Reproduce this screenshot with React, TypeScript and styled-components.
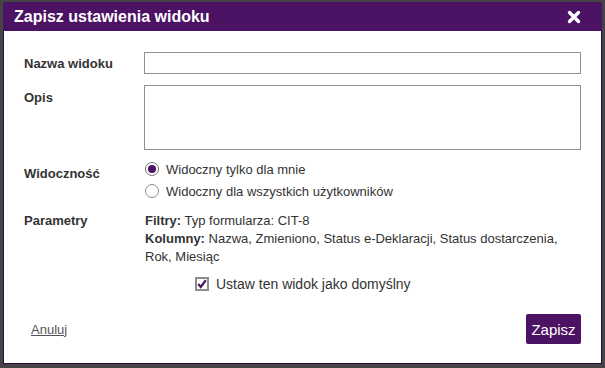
import React from "react";
import styled, { createGlobalStyle } from "styled-components";

const Global = createGlobalStyle`
  html, body { margin: 0; padding: 0; background: #454545; }
  body { font-family: "Liberation Sans", Arial, sans-serif; }
  * { box-sizing: border-box; }
`;

const Page = styled.div`
  width: 605px;
  height: 368px;
  padding: 2px 3px 4px 3px;
  background: #454545;
`;

const Dialog = styled.div`
  width: 599px;
  height: 362px;
  background: #fff;
  border: 1px solid #2d0b3f;
  display: flex;
  flex-direction: column;
`;

const Header = styled.div`
  height: 29px;
  background: #4c1264;
  display: flex;
  align-items: center;
  justify-content: space-between;
  padding: 0 21px 0 10px;
  margin: -1px -1px 0 -1px;
`;

const Title = styled.h1`
  margin: 0;
  font-size: 16px;
  font-weight: bold;
  color: #fff;
  padding-left: 1px;
`;

const Close = styled.button`
  border: 0;
  background: none;
  padding: 0;
  width: 14px;
  height: 14px;
  display: flex;
  cursor: pointer;
`;

const Body = styled.div`
  flex: 1;
  padding: 21px 20px 0 20px;
  display: grid;
  grid-template-columns: 120px 1fr;
  row-gap: 11px;
  align-content: start;
`;

const Label = styled.div<{ $top?: number }>`
  font-size: 13px;
  font-weight: bold;
  color: #333;
  padding-top: ${(p) => p.$top ?? 0}px;
`;

const Input = styled.input`
  width: 437px;
  height: 22px;
  border: 1px solid #8f8f8f;
  margin: 0;
  font: inherit;
  display: block;
`;

const TextArea = styled.textarea`
  width: 437px;
  height: 65px;
  border: 1px solid #8f8f8f;
  margin: 0;
  resize: none;
  display: block;
`;

const RadioGroup = styled.div`
  display: flex;
  flex-direction: column;
  gap: 6px;
`;

const RadioRow = styled.label`
  display: flex;
  align-items: center;
  gap: 7px;
  font-size: 13px;
  color: #333;
  height: 16px;
`;

const RadioDot = styled.span<{ $on?: boolean }>`
  width: 14px;
  height: 14px;
  border-radius: 50%;
  border: 1px solid ${(p) => (p.$on ? "#6e6e6e" : "#8c8c8c")};
  background: #fff;
  display: flex;
  align-items: center;
  justify-content: center;
  margin-left: 1px;
  &::after {
    content: "";
    display: ${(p) => (p.$on ? "block" : "none")};
    width: 8px;
    height: 8px;
    border-radius: 50%;
    background: #4c1264;
  }
`;

const Params = styled.div`
  font-size: 13px;
  color: #333;
  line-height: 18px;
  padding-left: 1px;
  width: 430px;
  b { font-weight: bold; }
`;

const ParamLine = styled.div<{ $top?: number }>`
  padding-top: ${(p) => p.$top ?? 0}px;
`;

const CheckRow = styled.label`
  grid-column: 2;
  display: flex;
  align-items: center;
  gap: 7px;
  font-size: 14px;
  color: #333;
  padding-left: 51px;
  margin-top: -1px;
`;

const CheckBox = styled.span`
  width: 14px;
  height: 14px;
  border: 2px solid #8c8c8c;
  display: flex;
  align-items: center;
  justify-content: center;
  background: #fff;
`;

const Footer = styled.div`
  display: flex;
  justify-content: space-between;
  align-items: center;
  padding: 0 20px 19px 27px;
`;

const Cancel = styled.a`
  font-size: 13px;
  color: #555;
  text-decoration: underline;
  cursor: pointer;
`;

const Save = styled.button`
  background: #4c1264;
  color: #fff;
  border: 0;
  border-radius: 2px;
  font-family: "Liberation Sans", Arial, sans-serif;
  font-size: 15px;
  width: 55px;
  height: 30px;
  padding: 0;
`;

export default function App() {
  return (
    <Page>
      <Global />
      <Dialog>
        <Header>
          <Title>Zapisz ustawienia widoku</Title>
          <Close aria-label="Zamknij">
            <svg width="14" height="14" viewBox="0 0 14 14">
              <path d="M2.5 2.5 L11.5 11.5 M11.5 2.5 L2.5 11.5" stroke="#fff" strokeWidth="3.4" strokeLinecap="round" />
            </svg>
          </Close>
        </Header>
        <Body>
          <Label $top={4}>Nazwa widoku</Label>
          <Input />
          <Label $top={5}>Opis</Label>
          <TextArea />
          <Label $top={5}>Widoczność</Label>
          <RadioGroup>
            <RadioRow>
              <RadioDot $on />
              Widoczny tylko dla mnie
            </RadioRow>
            <RadioRow>
              <RadioDot />
              Widoczny dla wszystkich użytkowników
            </RadioRow>
          </RadioGroup>
          <Label $top={3}>Parametry</Label>
          <Params>
            <ParamLine $top={2}>
              <b>Filtry:</b> Typ formularza: CIT-8
            </ParamLine>
            <ParamLine>
              <b>Kolumny:</b> Nazwa, Zmieniono, Status e-Deklaracji, Status dostarczenia, Rok, Miesiąc
            </ParamLine>
          </Params>
          <CheckRow>
            <CheckBox>
              <svg width="12" height="12" viewBox="0 0 12 12">
                <path d="M1.5 6 L4.5 9.5 L10.5 1.5" fill="none" stroke="#4c1264" strokeWidth="2.6" />
              </svg>
            </CheckBox>
            Ustaw ten widok jako domyślny
          </CheckRow>
        </Body>
        <Footer>
          <Cancel>Anuluj</Cancel>
          <Save>Zapisz</Save>
        </Footer>
      </Dialog>
    </Page>
  );
}
